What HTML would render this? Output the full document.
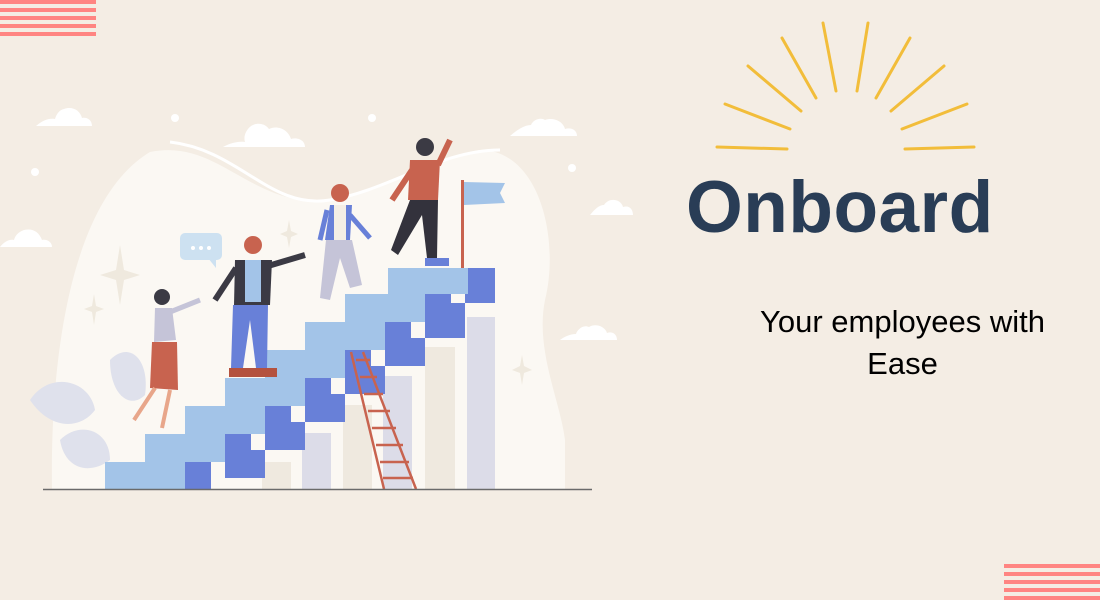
<!DOCTYPE html>
<html><head><meta charset="utf-8"><style>
html,body{margin:0;padding:0}
body{width:1100px;height:600px;background:#f4ede4;position:relative;overflow:hidden;font-family:"Liberation Sans",sans-serif}
.st{position:absolute;background:#ff8582}
.t1{position:absolute;left:686px;top:166px;font-size:73px;font-weight:bold;color:#293d56;letter-spacing:0.5px}
.sub{position:absolute;left:735px;width:335px;text-align:center;font-size:31px;color:#000;line-height:42px;top:301px}
</style></head><body>
<div class="st" style="left:0;top:0;width:96px;height:4px"></div>
<div class="st" style="left:0;top:8px;width:96px;height:4px"></div>
<div class="st" style="left:0;top:16px;width:96px;height:4px"></div>
<div class="st" style="left:0;top:24px;width:96px;height:4px"></div>
<div class="st" style="left:0;top:32px;width:96px;height:4px"></div>
<div class="st" style="left:1004px;top:564px;width:96px;height:3.5px"></div>
<div class="st" style="left:1004px;top:572px;width:96px;height:3.5px"></div>
<div class="st" style="left:1004px;top:580px;width:96px;height:3.5px"></div>
<div class="st" style="left:1004px;top:588px;width:96px;height:3.5px"></div>
<div class="st" style="left:1004px;top:596px;width:96px;height:3.5px"></div>

<svg width="1100" height="600" style="position:absolute;left:0;top:0">
<g stroke="#f2bd3a" stroke-width="3" stroke-linecap="round">
<line x1="717" y1="147" x2="787" y2="149"/>
<line x1="725" y1="104" x2="790" y2="129"/>
<line x1="748" y1="66" x2="801" y2="111"/>
<line x1="782" y1="38" x2="816" y2="98"/>
<line x1="823" y1="23" x2="836" y2="91"/>
<line x1="868" y1="23" x2="857" y2="91"/>
<line x1="910" y1="38" x2="876" y2="98"/>
<line x1="944" y1="66" x2="891" y2="111"/>
<line x1="967" y1="104" x2="902" y2="129"/>
<line x1="974" y1="147" x2="905" y2="149"/>
</g>
<path d="M52 489 C50 360 70 200 150 152 C210 140 240 190 300 200 C360 210 420 160 480 150 C540 150 560 240 545 300 C535 350 560 400 565 440 L565 489 Z" fill="#fbf8f3"/>
<path d="M170 142 C240 150 270 210 330 200 C390 190 440 150 500 150" stroke="#fff" stroke-width="3" fill="none"/>
<g fill="#fff">
<path d="M36 126 h56 c0-6-5-9-10-8 c-2-8-10-12-18-9 c-5 1-8 6-9 10 c-6-1-12 1-19 7z"/>
<path d="M223 147 h82 c0-7-8-10-14-8 c-3-10-14-14-22-10 c-5-7-16-7-21 0 c-4 5-4 10-3 13 c-9-1-16 2-22 5z"/>
<path d="M510 136 h67 c0-6-6-9-12-7 c-2-8-12-12-20-9 c-5-3-12 0-14 5 c-6 0-13 4-21 11z"/>
<path d="M590 215 h43 c0-6-4-10-10-8 c-2-8-14-10-19-2 c-5 0-9 4-14 10z"/>
<path d="M0 247 h52 c0-5-5-8-10-7 c-3-8-9-12-18-10 c-6 2-9 6-10 10 c-5-1-10 2-14 7z"/>
<path d="M560 340 h57 c0-6-5-9-10-7 c-2-7-12-10-18-6 c-6-3-12 3-13 7 c-6 0-12 3-16 6z"/>
<circle cx="35" cy="172" r="4"/><circle cx="175" cy="118" r="4"/><circle cx="372" cy="118" r="4"/><circle cx="572" cy="168" r="4"/>
</g>
<g fill="#efe9de">
<path d="M120 245 L124 270 L140 275 L124 280 L120 305 L116 280 L100 275 L116 270Z"/>
<path d="M94 294 L96 306 L104 309 L96 312 L94 325 L92 312 L84 309 L92 306Z"/>
<path d="M289 220 L291 231 L298 234 L291 237 L289 248 L287 237 L280 234 L287 231Z"/>
<path d="M522 355 L524 366 L532 370 L524 373 L522 385 L520 373 L512 370 L520 366Z"/>
</g>
<g fill="#dfe1ec">
<path d="M30 400 C50 370 90 380 95 410 C80 430 50 430 30 400Z"/>
<path d="M60 440 C80 420 110 430 110 460 C90 475 65 470 60 440Z"/>
<path d="M110 360 C130 340 150 360 145 395 C130 410 110 395 110 360Z"/>
</g>
<rect x="262" y="462" width="29" height="27" fill="#efe9df"/>
<rect x="302" y="433" width="29" height="56" fill="#dcdce8"/>
<rect x="343" y="405" width="29" height="84" fill="#efe9df"/>
<rect x="383" y="376" width="29" height="113" fill="#dcdce8"/>
<rect x="425" y="347" width="30" height="142" fill="#efe9df"/>
<rect x="467" y="317" width="28" height="172" fill="#dcdce8"/>
<g fill="#6880d8">
<rect x="185" y="462" width="26" height="27"/>
<rect x="225" y="434" width="26" height="44"/>
<rect x="251" y="450" width="14" height="28"/>
<rect x="265" y="406" width="26" height="44"/>
<rect x="291" y="422" width="14" height="28"/>
<rect x="305" y="378" width="26" height="44"/>
<rect x="331" y="394" width="14" height="28"/>
<rect x="345" y="350" width="26" height="44"/>
<rect x="371" y="366" width="14" height="28"/>
<rect x="385" y="322" width="26" height="44"/>
<rect x="411" y="338" width="14" height="28"/>
<rect x="425" y="294" width="26" height="44"/>
<rect x="451" y="303" width="14" height="35"/>
<rect x="465" y="268" width="30" height="35"/>
</g>
<g fill="#a3c4e8">
<rect x="105" y="462" width="80" height="27"/>
<rect x="145" y="434" width="80" height="28"/>
<rect x="185" y="406" width="80" height="28"/>
<rect x="225" y="378" width="80" height="28"/>
<rect x="265" y="350" width="80" height="28"/>
<rect x="305" y="322" width="80" height="28"/>
<rect x="345" y="294" width="80" height="28"/>
<rect x="388" y="268" width="80" height="26"/>
</g>
<g stroke="#c8634f" stroke-width="2.5">
<line x1="351" y1="352" x2="384" y2="489"/><line x1="363" y1="352" x2="416" y2="489"/>
<line x1="356" y1="360" x2="370" y2="360"/><line x1="360" y1="377" x2="377" y2="377"/>
<line x1="364" y1="394" x2="383" y2="394"/><line x1="368" y1="411" x2="390" y2="411"/>
<line x1="372" y1="428" x2="396" y2="428"/><line x1="376" y1="445" x2="403" y2="445"/>
<line x1="380" y1="462" x2="409" y2="462"/><line x1="383" y1="478" x2="413" y2="478"/>
</g>
<line x1="43" y1="489.5" x2="592" y2="489.5" stroke="#6a6a6a" stroke-width="1.5"/>
<rect x="461" y="180" width="3" height="88" fill="#c8634f"/>
<path d="M464 182 L505 183 L500 193 L505 203 L464 205Z" fill="#a3c4e8"/>
<rect x="180" y="233" width="42" height="27" rx="5" fill="#cde1f1"/>
<path d="M208 258 L216 268 L216 258Z" fill="#cde1f1"/>
<g fill="#fff"><circle cx="193" cy="248" r="2"/><circle cx="201" cy="248" r="2"/><circle cx="209" cy="248" r="2"/></g>
<circle cx="162" cy="297" r="8" fill="#3b3a44"/>
<path d="M155 308 L172 308 L176 340 L154 342Z" fill="#c5c4d8"/>
<path d="M170 312 L200 300" stroke="#c5c4d8" stroke-width="5"/>
<path d="M152 342 L177 342 L178 390 L150 388Z" fill="#c8634f"/>
<path d="M155 388 L134 420 M170 390 L162 428" stroke="#e8a68a" stroke-width="4"/>
<circle cx="253" cy="245" r="9" fill="#c8634f"/>
<path d="M235 260 L272 260 L270 305 L234 305Z" fill="#3b3a44"/>
<rect x="245" y="260" width="16" height="42" fill="#a3c4e8"/>
<path d="M268 266 L305 255" stroke="#3b3a44" stroke-width="6"/>
<path d="M236 268 L215 300" stroke="#3b3a44" stroke-width="6"/>
<path d="M233 305 L268 305 L267 368 L256 368 L250 320 L243 368 L231 368Z" fill="#6880d8"/>
<rect x="229" y="368" width="48" height="9" fill="#b4523f"/>
<circle cx="340" cy="193" r="9" fill="#c8634f"/>
<path d="M330 205 L352 205 L350 240 L325 240Z" fill="#6880d8"/>
<rect x="334" y="205" width="12" height="35" fill="#f4eee5"/>
<path d="M327 210 L320 240 M350 215 L370 238" stroke="#6880d8" stroke-width="5"/>
<path d="M326 240 L352 240 L362 285 L350 288 L340 258 L330 300 L320 298Z" fill="#c5c4d8"/>
<circle cx="425" cy="147" r="9" fill="#3b3a44"/>
<path d="M410 160 L440 160 L438 200 L408 200Z" fill="#c8634f"/>
<path d="M438 165 L450 140 M412 170 L392 200" stroke="#c8634f" stroke-width="6"/>
<path d="M410 200 L438 200 L437 258 L427 258 L422 215 L398 255 L391 250Z" fill="#33323c"/>
<rect x="425" y="258" width="24" height="8" fill="#6880d8"/>
</svg>

<div class="t1">Onboard</div>
<div class="sub">Your employees with<br>Ease</div>
</body></html>
